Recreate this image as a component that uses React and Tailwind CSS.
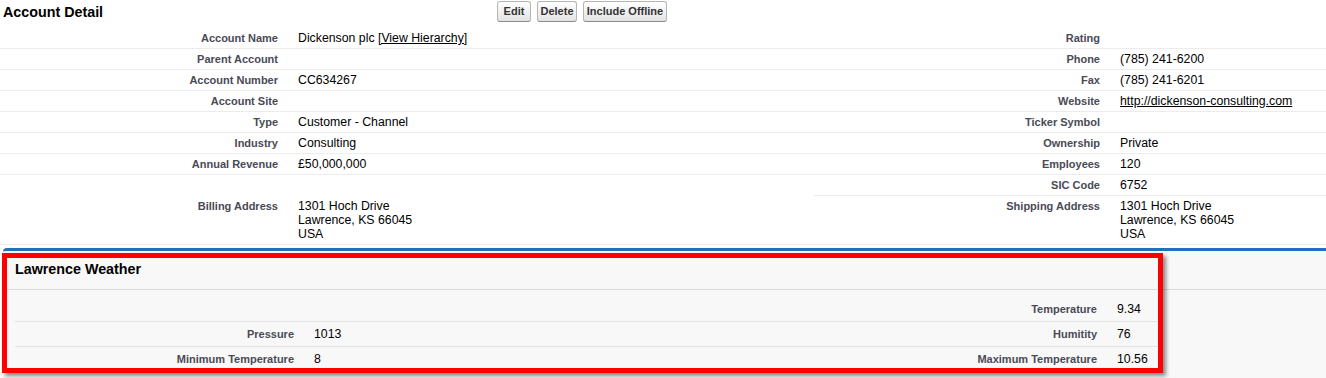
const FONT = { fontFamily: '"Liberation Sans", Arial, sans-serif' };

const detailRows = [
  [['Account Name', 'hierarchy'], ['Rating', '']],
  [['Parent Account', ''], ['Phone', '(785) 241-6200']],
  [['Account Number', 'CC634267'], ['Fax', '(785) 241-6201']],
  [['Account Site', ''], ['Website', 'website']],
  [['Type', 'Customer - Channel'], ['Ticker Symbol', '']],
  [['Industry', 'Consulting'], ['Ownership', 'Private']],
  [['Annual Revenue', '£50,000,000'], ['Employees', '120']],
  [null, ['SIC Code', '6752']],
  [['Billing Address', 'address'], ['Shipping Address', 'address']],
];

const weatherRows = [
  [null, ['Temperature', '9.34']],
  [['Pressure', '1013'], ['Humitity', '76']],
  [['Minimum Temperature', '8'], ['Maximum Temperature', '10.56']],
];

function Value({ v }) {
  if (v === 'hierarchy') {
    return (
      <>
        Dickenson plc <span className="underline">[View Hierarchy]</span>
      </>
    );
  }
  if (v === 'website') {
    return <span className="underline">http://dickenson-consulting.com</span>;
  }
  if (v === 'address') {
    return (
      <>
        1301 Hoch Drive
        <br />
        Lawrence, KS 66045
        <br />
        USA
      </>
    );
  }
  return v;
}

function Btn({ children, w }) {
  return (
    <button
      className={`${w} h-[21px] rounded-[3px] border border-[#b5b5b5] border-b-[#8a8a8a] bg-gradient-to-b from-white to-[#e3e3e3] text-[11px] font-bold text-[#333] leading-none text-center`}
    >
      {children}
    </button>
  );
}

function DetailCells({ pair, noBorder }) {
  const border = noBorder ? '' : 'border-b border-[#ececec]';
  return (
    <>
      <div
        className={`${border} py-[3px] pr-[10px] text-right text-[11px] font-bold leading-[14px] text-[#4a4a56]`}
      >
        {pair ? pair[0] : ''}
      </div>
      <div className={`${border} py-[3px] pl-[10px] text-[12.3px] leading-[14px] text-black`}>
        {pair ? <Value v={pair[1]} /> : ''}
      </div>
    </>
  );
}

function WeatherCells({ pair, border }) {
  const b = border ? 'border-b border-[#e3e3e3]' : '';
  return (
    <>
      <div
        className={`${b} flex h-[25px] items-center justify-end pr-[10px] text-[11px] font-bold text-[#4a4a56]`}
      >
        {pair ? pair[0] : ''}
      </div>
      <div className={`${b} flex h-[25px] items-center pl-[10px] text-[12.3px] text-black`}>
        {pair ? pair[1] : ''}
      </div>
    </>
  );
}

export default function App() {
  return (
    <div className="relative flex h-[378px] w-[1326px] flex-col overflow-hidden bg-white" style={FONT}>
      {/* header */}
      <div className="flex h-[28px] items-start">
        <h2 className="w-[497px] pl-[3px] pt-[4px] text-[14.3px] font-bold leading-[17px] text-black">
          Account Detail
        </h2>
        <div className="mt-[1px] flex gap-[6px]">
          <Btn w="w-[34px]">Edit</Btn>
          <Btn w="w-[40px]">Delete</Btn>
          <Btn w="w-[84px]">Include Offline</Btn>
        </div>
      </div>

      {/* detail grid */}
      <div className="grid grid-cols-[288px_526px_296px_1fr]">
        {detailRows.map((row, i) => (
          <div key={i} className="contents">
            <DetailCells pair={row[0]} noBorder={row[0] === null} />
            <DetailCells pair={row[1]} />
          </div>
        ))}
      </div>

      {/* weather panel */}
      <div className="ml-[3px] mt-[3px] flex flex-1 flex-col rounded-tl-[4px] border-t-[3px] border-[#236fbd] bg-[#f8f8f8]">
        <div className="flex h-[39px] items-center border-b border-[#dbdbdb] pl-[12px]">
          <h3 className="text-[14.3px] font-bold text-black">Lawrence Weather</h3>
        </div>
        <div className="ml-[12px] grid w-[1145px] grid-cols-[289px_500px_303px_1fr] pt-[7px]">
          {weatherRows.map((row, i) => (
            <div key={i} className="contents">
              <WeatherCells pair={row[0]} border={i < 2} />
              <WeatherCells pair={row[1]} border={i < 2} />
            </div>
          ))}
        </div>
      </div>

      {/* annotation box */}
      <div className="pointer-events-none absolute left-[2px] top-[253px] h-[120px] w-[1161px] border-[5px] border-[#ff0000] shadow-[3px_3px_4px_rgba(0,0,0,0.45)]" />
    </div>
  );
}
